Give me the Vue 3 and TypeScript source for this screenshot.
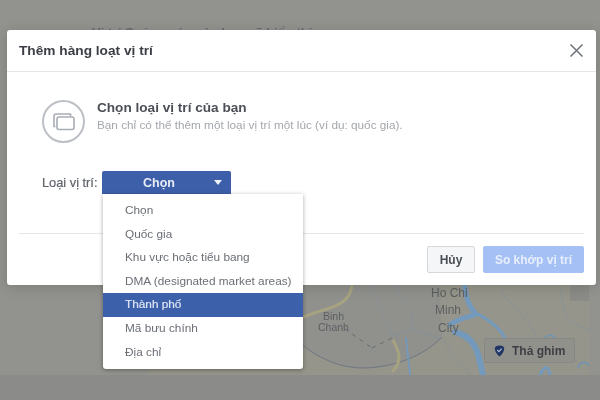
<template>
  <div class="page">
    <div class="backdrop">
      <div class="behind-title">Vị trí Quảng cáo của bạn sẽ hiển thị</div>
      <svg class="map" viewBox="147 285 442 90" width="442" height="90">
        <rect x="147" y="285" width="442" height="90" fill="#95958b" />
        <rect x="570" y="285" width="19" height="16" fill="#8b8b87" />
        <path d="M290 332 C303 350 333 368 362 368 C395 368 425 355 442 337 L440 285 L290 285z" fill="#90908d" />
        <path d="M290 332 C303 350 333 368 362 368 C395 368 425 355 442 337" fill="none" stroke="#6b7480" stroke-width="0.9" />
        <g fill="none" stroke="#84919a" stroke-width="0.7">
          <path d="M370 285 C380 305 385 320 392 336 L412 330 L440 338" />
          <path d="M395 285 C400 300 415 310 413 330" />
          <path d="M442 337 C450 355 462 362 470 375" />
          <path d="M500 290 C515 310 530 320 540 345" />
          <path d="M560 285 C565 300 555 320 590 330" />
          <path d="M543 342 C546 333 554 333 557 342" stroke="#6f94b4" stroke-width="1.600" />
          <path d="M578 368 C580 362 586 360 589 366" stroke="#6f94b4" stroke-width="1.600" />
        </g>
        <path d="M303 317 L317 312 C330 308 350 305 352 285" fill="none" stroke="#a6a380" stroke-width="3" />
        <path d="M393 340 C398 350 404 360 392 372" fill="none" stroke="#a6a380" stroke-width="3" />
        <path d="M345 329 L372 348 M372 348 L392 338" fill="none" stroke="#5f6b72" stroke-width="1" stroke-dasharray="4 5" />
        <g fill="none" stroke="#7399bc" stroke-linecap="round">
          <path d="M465 287 C466 300 470 308 476 314 C468 318 458 318 450 325" stroke-width="5" />
          <path d="M474 312 C485 318 498 325 505 338" stroke-width="3" />
          <path d="M455 332 C468 335 476 345 479 358 L483 375" stroke-width="6" />
          <path d="M406 338 L410 375" stroke-width="1.800" />
          <path d="M540 375 C545 365 548 365 550 375" stroke-width="3" />
        </g>
        <text x="431" y="297" class="map-label">Ho Chi</text>
        <text x="435" y="314" class="map-label">Minh</text>
        <text x="438" y="332" class="map-label">City</text>
        <text x="323" y="320" class="map-label small">Binh</text>
        <text x="318" y="331" class="map-label small">Chanh</text>
      </svg>
      <div class="drop-pin">
        <svg width="11" height="12" viewBox="0 0 11 12">
          <path d="M5.500.5C2.700.5.800 1.400.8 3.500c0 3.200 2.500 6.200 4.700 8C7.700 9.700 10.200 6.700 10.200 3.500c0-2.100-1.900-3-4.700-3z" fill="#1f3565" />
          <path d="M3.300 5l1.600 1.600 2.800-3" fill="none" stroke="#b4bccb" stroke-width="1.200" />
        </svg>
        <span>Thả ghim</span>
      </div>
    </div>

    <div class="modal">
      <header class="modal-head">
        <h1>Thêm hàng loạt vị trí</h1>
        <svg class="close" width="13" height="13" viewBox="0 0 13 13">
          <path d="M.5.5l12 12M12.500.5l-12 12" stroke="#6d7178" stroke-width="1.500" fill="none" />
        </svg>
      </header>

      <section class="intro">
        <div class="intro-icon">
          <svg width="24" height="22" viewBox="0 0 24 22" fill="none" stroke="#a9adb4" stroke-width="1.600">
            <path d="M3.500 15.500H2V5a2 2 0 0 1 2-2h14.500v2.500" />
            <rect x="5" y="6" width="17" height="12.500" rx="2" />
          </svg>
        </div>
        <div class="intro-text">
          <h2>Chọn loại vị trí của bạn</h2>
          <p>Bạn chỉ có thể thêm một loại vị trí một lúc (ví dụ: quốc gia).</p>
        </div>
      </section>

      <div class="field">
        <label>Loại vị trí:</label>
        <div class="select">
          <button class="select-btn">
            <span>Chọn</span>
            <i class="caret"></i>
          </button>
          <ul class="menu">
            <li v-for="opt in options" :key="opt" :class="{ active: opt === selected }">{{ opt }}</li>
          </ul>
        </div>
      </div>

      <footer class="modal-foot">
        <button class="btn cancel">Hủy</button>
        <button class="btn match">So khớp vị trí</button>
      </footer>
    </div>
  </div>
</template>

<script setup lang="ts">
const selected = 'Thành phố'

const options: string[] = [
  'Chọn',
  'Quốc gia',
  'Khu vực hoặc tiểu bang',
  'DMA (designated market areas)',
  'Thành phố',
  'Mã bưu chính',
  'Địa chỉ'
]
</script>

<style>
html, body {
  margin: 0;
  overflow: hidden;
}
</style>

<style scoped>
.page {
  position: relative;
  width: 600px;
  height: 400px;
  overflow: hidden;
  background: #92928e;
  font-family: "Liberation Sans", Arial, sans-serif;
  filter: blur(0.55px);
}

.backdrop {
  position: absolute;
  inset: 0;
}

.backdrop::after {
  content: "";
  position: absolute;
  left: 0;
  right: 0;
  top: 375px;
  bottom: 0;
  background: #8b8b89;
}

.behind-title {
  position: absolute;
  left: 92px;
  top: 25px;
  font-size: 13px;
  font-weight: bold;
  white-space: nowrap;
  color: #6c6c6a;
}

.map {
  position: absolute;
  left: 147px;
  top: 285px;
  display: block;
  filter: blur(0.5px);
}

.map-label {
  font-size: 12px;
  fill: #5c5f61;
  font-family: "Liberation Sans", Arial, sans-serif;
}

.map-label.small {
  font-size: 10.500px;
}

.drop-pin {
  position: absolute;
  left: 484px;
  top: 338px;
  width: 91px;
  height: 25px;
  box-sizing: border-box;
  padding-left: 9px;
  display: flex;
  align-items: center;
  gap: 7px;
  background: #91918c;
  border: 1px solid #878783;
  border-radius: 2px;
  font-size: 12px;
  font-weight: bold;
  color: #3d3f44;
}

.modal {
  position: absolute;
  left: 7px;
  top: 30px;
  width: 589px;
  height: 255px;
  display: flex;
  flex-direction: column;
  background: #fff;
  border-radius: 3px;
  box-shadow: 0 2px 14px rgba(0, 0, 0, 0.16);
}

.modal-head {
  height: 41px;
  flex: none;
  padding: 0 13px 0 12px;
  display: flex;
  align-items: center;
  justify-content: space-between;
  border-bottom: 1px solid #e5e6e9;
}

h1 {
  margin: 0;
  font-size: 13.700px;
  font-weight: bold;
  color: #3b3e44;
}

.intro {
  margin: 28px 0 0 35px;
  display: flex;
  align-items: flex-start;
  gap: 12px;
}

.intro-icon {
  width: 39px;
  height: 39px;
  flex: none;
  display: flex;
  align-items: center;
  justify-content: center;
  border: 2px solid #bcc0c5;
  border-radius: 50%;
}

h2 {
  margin: 0;
  font-size: 13.600px;
  font-weight: bold;
  line-height: 15px;
  color: #4b4f56;
}

.intro-text p {
  margin: 2px 0 0;
  font-size: 11.750px;
  line-height: 15px;
  color: #a4a7ad;
}

.field {
  margin: 28px 0 0 35px;
  display: flex;
  align-items: center;
  gap: 4px;
}

label {
  font-size: 12.800px;
  width: 56px;
  white-space: nowrap;
  color: #60646b;
  -webkit-text-stroke: 0.2px #60646b;
}

.select {
  position: relative;
}

.select-btn {
  width: 129px;
  height: 23px;
  padding: 0 9px 0 0;
  display: flex;
  align-items: center;
  border: none;
  border-radius: 2px 2px 0 0;
  background: #3d5fa9;
  color: #e9edf6;
  font-family: inherit;
  font-size: 12.500px;
  font-weight: bold;
}

.select-btn span {
  flex: 1;
  padding: 0 6px 0 8px;
}

.caret {
  width: 0;
  height: 0;
  border-left: 4px solid transparent;
  border-right: 4px solid transparent;
  border-top: 5px solid #eef1f7;
}

.menu {
  position: absolute;
  left: 1px;
  top: 23px;
  z-index: 2;
  width: 200px;
  margin: 0;
  padding: 5px 0 5px;
  list-style: none;
  background: #fff;
  border-radius: 0 0 3px 3px;
  box-shadow: 0 1px 4px rgba(0, 0, 0, 0.35);
}

.menu li {
  height: 23.600px;
  padding-left: 22px;
  font-size: 11.800px;
  line-height: 23.600px;
  white-space: nowrap;
  color: #6a6e75;
}

.menu li.active {
  background: #3d60aa;
  color: #dfe6f5;
  -webkit-text-stroke: 0.2px #dfe6f5;
}

.modal-foot {
  margin: auto 12px 0 12px;
  height: 39px;
  flex: none;
  display: flex;
  justify-content: flex-end;
  gap: 8px;
  padding-top: 12px;
  border-top: 1px solid #e5e6e9;
}

.btn {
  height: 27px;
  border-radius: 2px;
  font-family: inherit;
  font-size: 12px;
  font-weight: bold;
}

.cancel {
  width: 48px;
  background: #f5f6f7;
  border: 1px solid #d5d7db;
  color: #4b4f56;
}

.match {
  width: 101px;
  background: #a5c0f4;
  border: 1px solid #a5c0f4;
  color: #e8effc;
}
</style>
